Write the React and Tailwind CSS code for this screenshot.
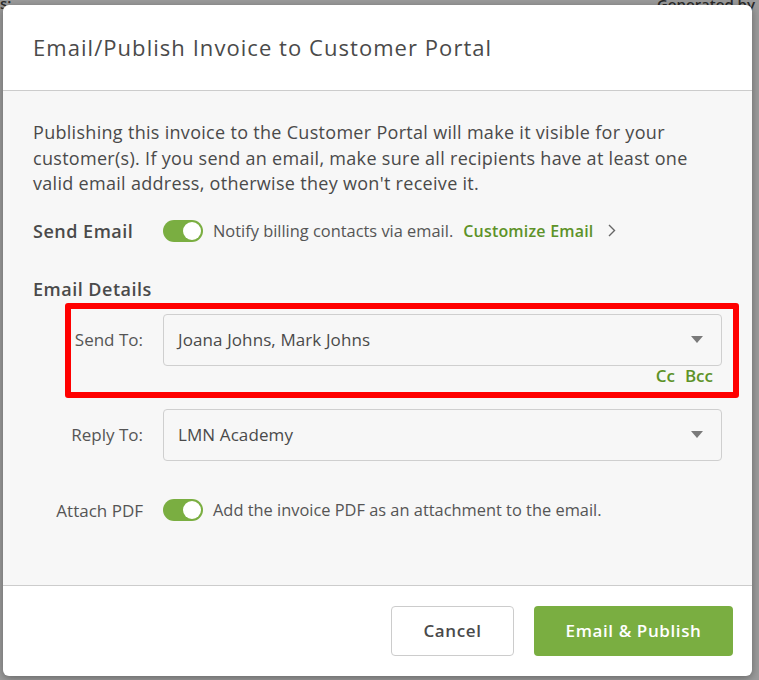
import { useState } from 'react';

const Toggle = ({ on, onChange }) => (
  <button
    type="button"
    onClick={() => onChange(!on)}
    className={`relative h-[22px] w-[40px] shrink-0 rounded-full ${on ? 'bg-[#7aae41]' : 'bg-[#cccccc]'}`}
  >
    <span
      className={`absolute top-[2px] h-[18px] w-[18px] rounded-full bg-white ${on ? 'left-[20px]' : 'left-[2px]'}`}
    />
  </button>
);

const Select = ({ value }) => (
  <div className="flex h-[52px] flex-1 items-center justify-between rounded-[4px] border border-[#cfcfcf] bg-[#f7f7f7] pl-[14px] pr-[18px] text-[17px] tracking-[0.1px] text-[#4a4a4a]">
    <span>{value}</span>
    <svg width="12" height="7" viewBox="0 0 12 7">
      <path d="M0 0 L12 0 L6 7 Z" fill="#7a7a7a" />
    </svg>
  </div>
);

const App = () => {
  const [sendEmail, setSendEmail] = useState(true);
  const [attachPdf, setAttachPdf] = useState(true);

  return (
    <div
      className="relative h-[680px] w-[759px] overflow-hidden bg-[#9c9c9c] pl-[3px] pt-[5px]"
      style={{ fontFamily: '"Open Sans", "Liberation Sans", sans-serif' }}
    >
      {/* page behind the overlay */}
      <div className="absolute right-[4px] top-[-7px] text-[15px] font-semibold text-[#2a2a2a]">Generated by</div>
      <div className="absolute left-[0px] top-[-8px] text-[15px] font-semibold text-[#2a2a2a]">s:</div>

      <div className="relative flex h-[671px] w-[749px] flex-col overflow-hidden rounded-[6px] bg-white shadow-[0_2px_8px_rgba(0,0,0,0.35)]">
        <div className="flex h-[86px] shrink-0 items-center border-b border-[#cccccc] px-[30px]">
          <h1 className="text-[22px] tracking-[1.05px] text-[#4a4a4a]">Email/Publish Invoice to Customer Portal</h1>
        </div>

        <div className="relative flex-1 bg-[#f7f7f7] px-[30px] pt-[29px]">
          <p className="text-[18px] leading-[25.5px] tracking-[0.3px] text-[#4a4a4a]">
            Publishing this invoice to the Customer Portal will make it visible for your
            <br />
            customer(s). If you send an email, make sure all recipients have at least one
            <br />
            valid email address, otherwise they won't receive it.
          </p>

          <div className="mt-[23px] flex items-center leading-[22px]">
            <span className="w-[130px] text-[18px] font-semibold tracking-[0.5px] text-[#4a4a4a]">Send Email</span>
            <Toggle on={sendEmail} onChange={setSendEmail} />
            <span className="ml-[10px] text-[16.4px] text-[#555555]">Notify billing contacts via email.</span>
            <a className="ml-[10px] text-[16px] font-semibold tracking-[0.2px] text-[#5d9228]">Customize Email</a>
            <svg className="ml-[14px]" width="8" height="13" viewBox="0 0 8 13">
              <path d="M1 1 L6.5 6.5 L1 12" fill="none" stroke="#666" strokeWidth="1.4" />
            </svg>
          </div>

          <h2 className="mt-[36px] text-[18px] font-semibold leading-[22px] tracking-[0.5px] text-[#4a4a4a]">Email Details</h2>

          <div className="mt-[14px] flex items-center">
            <span className="w-[110px] text-right text-[17px] text-[#555555]">Send To:</span>
            <div className="ml-[20px] flex flex-1">
              <Select value="Joana Johns, Mark Johns" />
            </div>
          </div>
          <div className="flex justify-end gap-[10px] pr-[9px] text-[17px] font-semibold leading-[20px] text-[#5d9228]">
            <span>Cc</span>
            <span>Bcc</span>
          </div>

          <div className="mt-[23px] flex items-center">
            <span className="w-[110px] text-right text-[17px] text-[#555555]">Reply To:</span>
            <div className="ml-[20px] flex flex-1">
              <Select value="LMN Academy" />
            </div>
          </div>

          <div className="mt-[37px] flex items-center">
            <span className="w-[110px] text-right text-[17px] text-[#555555]">Attach PDF</span>
            <div className="ml-[20px] flex items-center">
              <Toggle on={attachPdf} onChange={setAttachPdf} />
              <span className="ml-[10px] text-[16.4px] text-[#555555]">Add the invoice PDF as an attachment to the email.</span>
            </div>
          </div>

          {/* highlight around the recipients field */}
          <div className="pointer-events-none absolute left-[62px] top-[212px] h-[95px] w-[674px] rounded-[3px] border-[6px] border-[#ff0000]" />
        </div>

        <div className="flex h-[91px] shrink-0 items-center justify-end gap-[20px] border-t border-[#cccccc] pr-[19px]">
          <button className="h-[50px] w-[123px] rounded-[4px] border border-[#cccccc] bg-white text-[17px] font-semibold tracking-[0.6px] text-[#4a4a4a]">
            Cancel
          </button>
          <button className="h-[50px] w-[199px] rounded-[4px] bg-[#7aae41] text-[17px] font-semibold tracking-[0.6px] text-white">
            Email &amp; Publish
          </button>
        </div>
      </div>
    </div>
  );
};

export default App;
